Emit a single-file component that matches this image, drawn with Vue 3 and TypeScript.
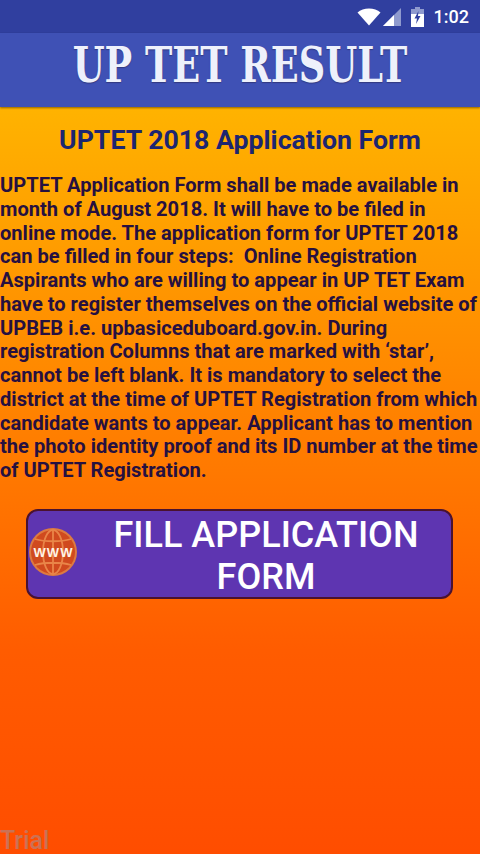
<script setup lang="ts">
const paragraph = `UPTET Application Form shall be made available in month of August 2018. It will have to be filed in online mode. The application form for UPTET 2018 can be filled in four steps:  Online Registration Aspirants who are willing to appear in UP TET Exam have to register themselves on the official website of UPBEB i.e. upbasiceduboard.gov.in. During registration Columns that are marked with ‘star’, cannot be left blank. It is mandatory to select the district at the time of UPTET Registration from which candidate wants to appear. Applicant has to mention the photo identity proof and its ID number at the time of UPTET Registration.`
</script>

<template>
  <div class="screen">
    <div class="status">
      <svg class="wifi" viewBox="0 0 24 18" width="24" height="18"><path d="M12 17.500 0.500 4.500C3.500 2 7.500 0.500 12 0.500s8.500 1.500 11.500 4z" fill="#fff"/></svg>
      <svg class="signal" viewBox="0 0 18 18" width="18" height="18"><path d="M0 18 18 0v18z" fill="#8f9ace"/><path d="M0 18 11 7v11z" fill="#fff"/></svg>
      <svg class="battery" viewBox="0 0 13 20" width="13" height="20"><path d="M4 0h5v2h4v18H0V2h4z" fill="#fff"/><path d="M4 0h5v2h4v5H0V2h4z" fill="#8f9ace"/><path d="M7.500 4 3.500 11.500H6L5 17 9.500 9H7z" fill="#303f9f"/></svg>
      <span class="time">1:02</span>
    </div>
    <header class="bar">
      <h1 class="title">UP TET RESULT</h1>
    </header>
    <main class="content">
      <h2 class="heading">UPTET 2018 Application Form</h2>
      <p class="body">{{ paragraph }}</p>
      <button class="cta" type="button">
        <svg class="globe" viewBox="0 0 48 48" width="48" height="48">
          <circle cx="24" cy="24" r="24" fill="#dd7a40"/>
          <circle cx="24" cy="24" r="22" fill="#d04a1e"/>
          <g fill="none" stroke="#e98548" stroke-width="1.800">
            <ellipse cx="24" cy="24" rx="10" ry="22"/>
            <path d="M24 2v44M6 11c10 3 26 3 36 0M6 37c10-3 26-3 36 0"/>
          </g>
          <text x="24.500" y="29" text-anchor="middle" class="www">WWW</text>
        </svg>
        <span class="cta-label">FILL APPLICATION FORM</span>
      </button>
    </main>
    <div class="trial">Trial</div>
  </div>
</template>

<style scoped>
.screen {
  position: relative;
  width: 480px;
  height: 854px;
  display: flex;
  flex-direction: column;
  overflow: hidden;
  background: linear-gradient(180deg, #ffb300 107px, #ff7500 495px, #ff5c00 650px, #ff4d00 854px);
  font-family: Roboto, "Liberation Sans", sans-serif;
}
.status {
  height: 33px;
  flex: none;
  background: #303f9f;
  display: flex;
  align-items: center;
  justify-content: flex-end;
  padding-right: 11px;
  box-sizing: border-box;
  color: #fff;
}
.wifi { margin-right: 2px; }
.signal { margin-right: 10px; }
.battery { margin-right: 10px; }
.time { font-size: 18px; font-weight: 500; line-height: 20px; }
.bar {
  height: 74px;
  flex: none;
  background: #3f51b5;
  display: flex;
  align-items: center;
  justify-content: center;
  box-shadow: 0 1px 2px rgba(0, 0, 0, 0.45);
}
.title {
  margin: 0;
  color: #eef1fb;
  font-family: "DejaVu Serif", serif;
  font-weight: 700;
  font-size: 36.700px;
  line-height: 48px;
  white-space: nowrap;
  transform: translateY(-4px) scaleY(1.3);
  text-shadow: 0 1px 1px rgba(40, 40, 90, 0.6);
}
.content { flex: 1; }
.heading {
  margin: 18px 0 0;
  text-align: center;
  color: #1d2670;
  font-size: 26.700px;
  font-weight: 700;
  line-height: 30px;
}
.body {
  margin: 19px 0 0;
  color: #261040;
  font-size: 20.100px;
  font-weight: 700;
  line-height: 23.750px;
  white-space: pre-wrap;
}
.cta {
  position: relative;
  display: block;
  box-sizing: border-box;
  width: 427px;
  height: 90px;
  margin: 26px 0 0 26px;
  padding: 3px 0 0 53px;
  background: #5e35b1;
  border: 2px solid #4a1230;
  border-radius: 12px;
  color: #fff;
  font-family: inherit;
}
.globe { position: absolute; left: 1px; top: 17px; }
.www { font-family: "Liberation Sans", sans-serif; font-size: 13px; font-weight: 700; fill: #fff3e4; letter-spacing: 1px; }
.cta-label { font-size: 36px; font-weight: 500; line-height: 42px; display: block; }
.trial {
  position: absolute;
  left: 0;
  bottom: -1px;
  font-size: 25px;
  font-weight: 500;
  color: rgba(150, 150, 170, 0.5);
}
</style>
